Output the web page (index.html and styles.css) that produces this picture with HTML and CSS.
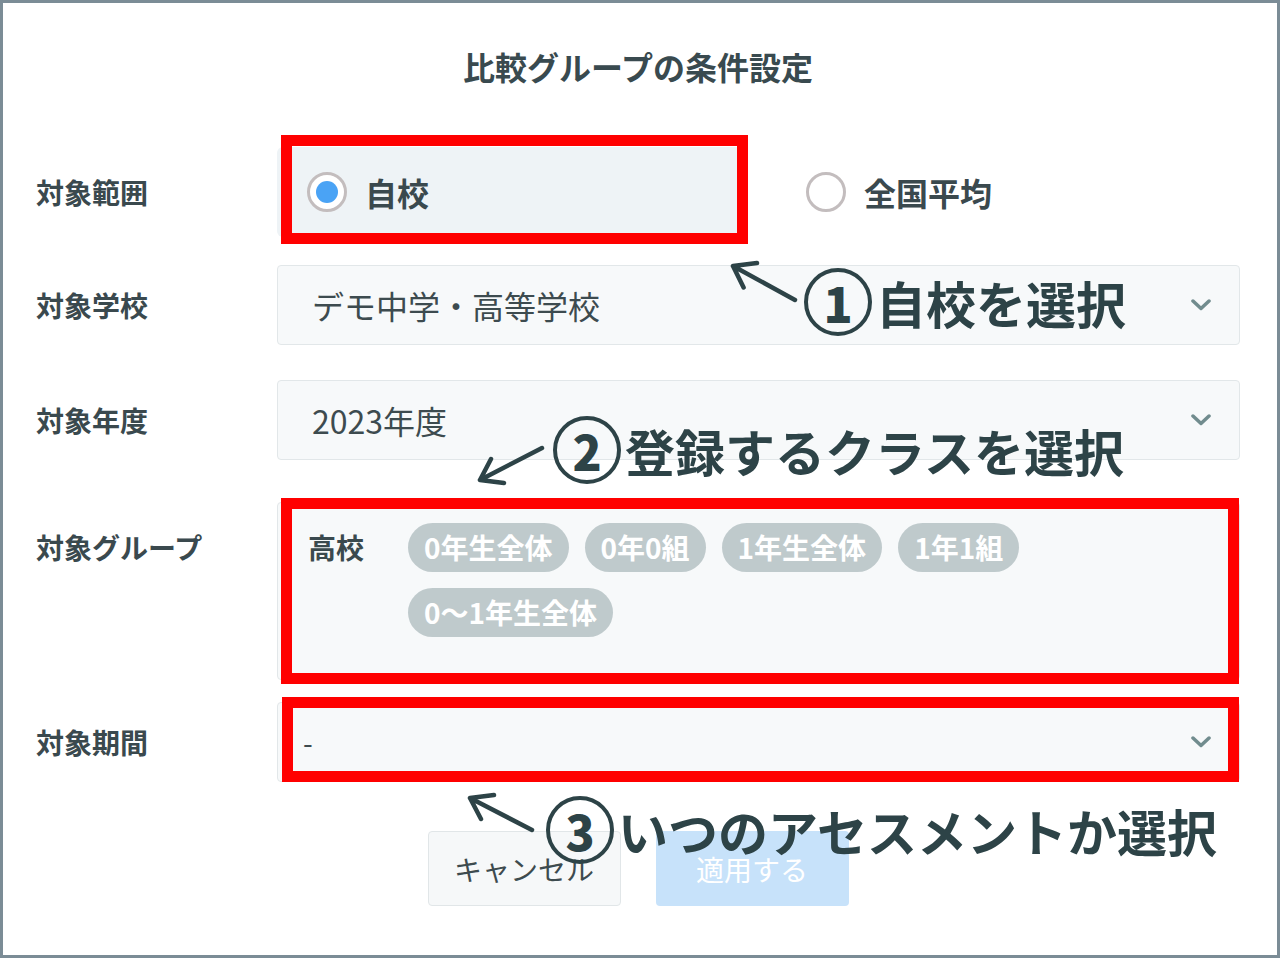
FILE: index.html
```html
<!DOCTYPE html>
<html lang="ja">
<head>
  <meta charset="UTF-8">
  <meta name="viewport" content="width=device-width, initial-scale=1.0">
  <title>比較グループの条件設定</title>
  <link rel="stylesheet" href="styles.css">
</head>
<body>
  <div class="page">
    <h2 class="modal-title">比較グループの条件設定</h2>

    <div class="form">
      <div class="form-row row-scope">
        <div class="field-label">対象範囲</div>
        <div class="radio-group">
          <div class="radio-option is-checked is-marked mark-radio">
            <span class="radio-dot"></span>
            <span>自校</span>
          </div>
          <div class="radio-option">
            <span class="radio-dot"></span>
            <span>全国平均</span>
          </div>
        </div>
      </div>

      <div class="form-row row-school">
        <div class="field-label">対象学校</div>
        <div class="select">
          <span>デモ中学・高等学校</span>
          <svg class="chevron" width="20" height="12" viewBox="0 0 20 12"><path d="M2 2 L10 9.5 L18 2"/></svg>
        </div>
      </div>

      <div class="form-row row-year">
        <div class="field-label">対象年度</div>
        <div class="select">
          <span>2023年度</span>
          <svg class="chevron" width="20" height="12" viewBox="0 0 20 12"><path d="M2 2 L10 9.5 L18 2"/></svg>
        </div>
      </div>

      <div class="form-row row-group">
        <div class="field-label label-top">対象グループ</div>
        <div class="group-box is-marked mark-group">
          <div class="group-label">高校</div>
          <div class="chips">
            <span class="chip">0年生全体</span>
            <span class="chip">0年0組</span>
            <span class="chip">1年生全体</span>
            <span class="chip">1年1組</span>
            <span class="chip">0〜1年生全体</span>
          </div>
        </div>
      </div>

      <div class="form-row row-period">
        <div class="field-label">対象期間</div>
        <div class="select is-marked mark-period">
          <span class="dash">-</span>
          <svg class="chevron" width="20" height="12" viewBox="0 0 20 12"><path d="M2 2 L10 9.5 L18 2"/></svg>
        </div>
      </div>
    </div>

    <div class="actions">
      <button class="btn btn-cancel">キャンセル</button>
      <button class="btn btn-apply">適用する</button>
    </div>

    <!-- 説明用の注釈 -->
    <svg class="arrows" width="1274" height="952" viewBox="3 3 1274 952">
      <path d="M795 300 L733 266 M743.6 287.5 L733 266 L757 263"/>
      <path d="M542 448 L480 480 M491 459 L480 480 L504 483"/>
      <path d="M532 830 L470 798 M481 819 L470 798 L494 795"/>
    </svg>
    <div class="note note-1"><span class="note-num">1</span>自校を選択</div>
    <div class="note note-2"><span class="note-num">2</span>登録するクラスを選択</div>
    <div class="note note-3"><span class="note-num">3</span>いつのアセスメントか選択</div>
  </div>
</body>
</html>
```

FILE: styles.css
```css
:root {
  --text: #3a494e;
  --note: #2d4347;
  --field-bg: #f7f9fa;
  --field-border: #e2e7e9;
  --chip-bg: #bfcacc;
  --mark: #ff0000;
}

* {
  box-sizing: border-box;
}

body {
  margin: 0;
  font-family: "Noto Sans CJK JP", "Noto Sans", sans-serif;
  color: var(--text);
  background: #fff;
}

.page {
  position: relative;
  width: 1280px;
  height: 958px;
  border: 3px solid #7b8c96;
  background: #fff;
  padding: 43px 37px 0 33px;
  overflow: hidden;
}

.modal-title {
  margin: 0;
  font-size: 32px;
  line-height: 40px;
  font-weight: 700;
  text-align: center;
  color: #394a4f;
}

.form {
  margin-top: 61px;
}

.form-row {
  display: grid;
  grid-template-columns: 241px 1fr;
  align-items: center;
}

.row-school {
  margin-top: 28px;
}

.row-year {
  margin-top: 35px;
}

.row-group {
  margin-top: 42px;
  align-items: start;
}

.row-period {
  margin-top: 22px;
}

.field-label {
  font-size: 28px;
  font-weight: 700;
  line-height: 40px;
}

.label-top {
  padding-top: 21px;
  line-height: 48px;
}

/* ラジオボタン */
.radio-group {
  display: flex;
  gap: 31px;
}

.radio-option {
  display: flex;
  align-items: center;
  gap: 18px;
  width: 468px;
  height: 90px;
  padding-left: 30px;
  border-radius: 6px;
  font-size: 32px;
  font-weight: 700;
}

.radio-option.is-checked {
  background: #eef3f6;
}

.radio-dot {
  width: 40px;
  height: 40px;
  border: 3px solid #c3bdbe;
  border-radius: 50%;
  background: #fff;
  display: flex;
  align-items: center;
  justify-content: center;
}

.is-checked .radio-dot::before {
  content: "";
  width: 22px;
  height: 22px;
  border-radius: 50%;
  background: #4aa3f5;
}

/* セレクト */
.select {
  display: flex;
  align-items: center;
  justify-content: space-between;
  height: 80px;
  padding: 0 28px 0 34px;
  background: var(--field-bg);
  border: 1px solid var(--field-border);
  border-radius: 4px;
  font-size: 32px;
  color: #3d4b4f;
}

.select .dash {
  margin-left: -9px;
  font-size: 28px;
}

.chevron path {
  fill: none;
  stroke: #718c8e;
  stroke-width: 3.5;
  stroke-linecap: round;
  stroke-linejoin: round;
}

/* グループ */
.group-box {
  display: flex;
  align-items: flex-start;
  padding: 20px 30px 42px;
  background: var(--field-bg);
  border: 1px solid var(--field-border);
  border-radius: 4px;
}

.group-label {
  font-size: 28px;
  font-weight: 700;
  line-height: 48px;
  margin-right: 44px;
  white-space: nowrap;
}

.chips {
  display: flex;
  flex-wrap: wrap;
  gap: 16px;
}

.chip {
  height: 49px;
  line-height: 49px;
  padding: 0 16px;
  border-radius: 25px;
  background: var(--chip-bg);
  color: #fff;
  font-size: 28px;
  font-weight: 700;
  white-space: nowrap;
}

/* ボタン */
.actions {
  display: flex;
  justify-content: center;
  gap: 35px;
  margin-top: 49px;
}

.btn {
  width: 193px;
  height: 75px;
  border-radius: 4px;
  font-family: inherit;
  font-size: 28px;
  padding: 0;
}

.btn-cancel {
  background: #f6f8f9;
  border: 1px solid #e1e6e8;
  color: #3d4b4f;
}

.btn-apply {
  background: #c7e2fa;
  border: none;
  color: #fff;
}

/* 赤枠 */
.is-marked {
  position: relative;
}

.is-marked::after {
  content: "";
  position: absolute;
  border: 11px solid var(--mark);
  pointer-events: none;
}

.mark-radio::after {
  top: -12px;
  left: 4px;
  right: -3px;
  bottom: -7px;
}

.mark-group::after {
  top: -5px;
  left: 3px;
  right: 0;
  bottom: -5px;
}

.mark-period::after {
  top: -6px;
  left: 4px;
  right: 0;
  bottom: -1px;
}

/* 注釈 */
.arrows {
  position: absolute;
  top: 0;
  left: 0;
  pointer-events: none;
}

.arrows path {
  fill: none;
  stroke: var(--note);
  stroke-width: 4.5;
  stroke-linecap: round;
  stroke-linejoin: round;
}

.note {
  position: absolute;
  display: flex;
  align-items: center;
  gap: 4px;
  height: 66px;
  font-size: 50px;
  font-weight: 700;
  line-height: 1;
  color: var(--note);
  white-space: nowrap;
}

.note-num {
  width: 68px;
  height: 68px;
  border: 4.5px solid var(--note);
  border-radius: 50%;
  display: flex;
  align-items: center;
  justify-content: center;
  font-size: 48px;
  font-weight: 900;
}

.note-1 {
  left: 801px;
  top: 266px;
}

.note-2 {
  left: 550px;
  top: 414px;
}

.note-3 {
  left: 543px;
  top: 794px;
}
```
